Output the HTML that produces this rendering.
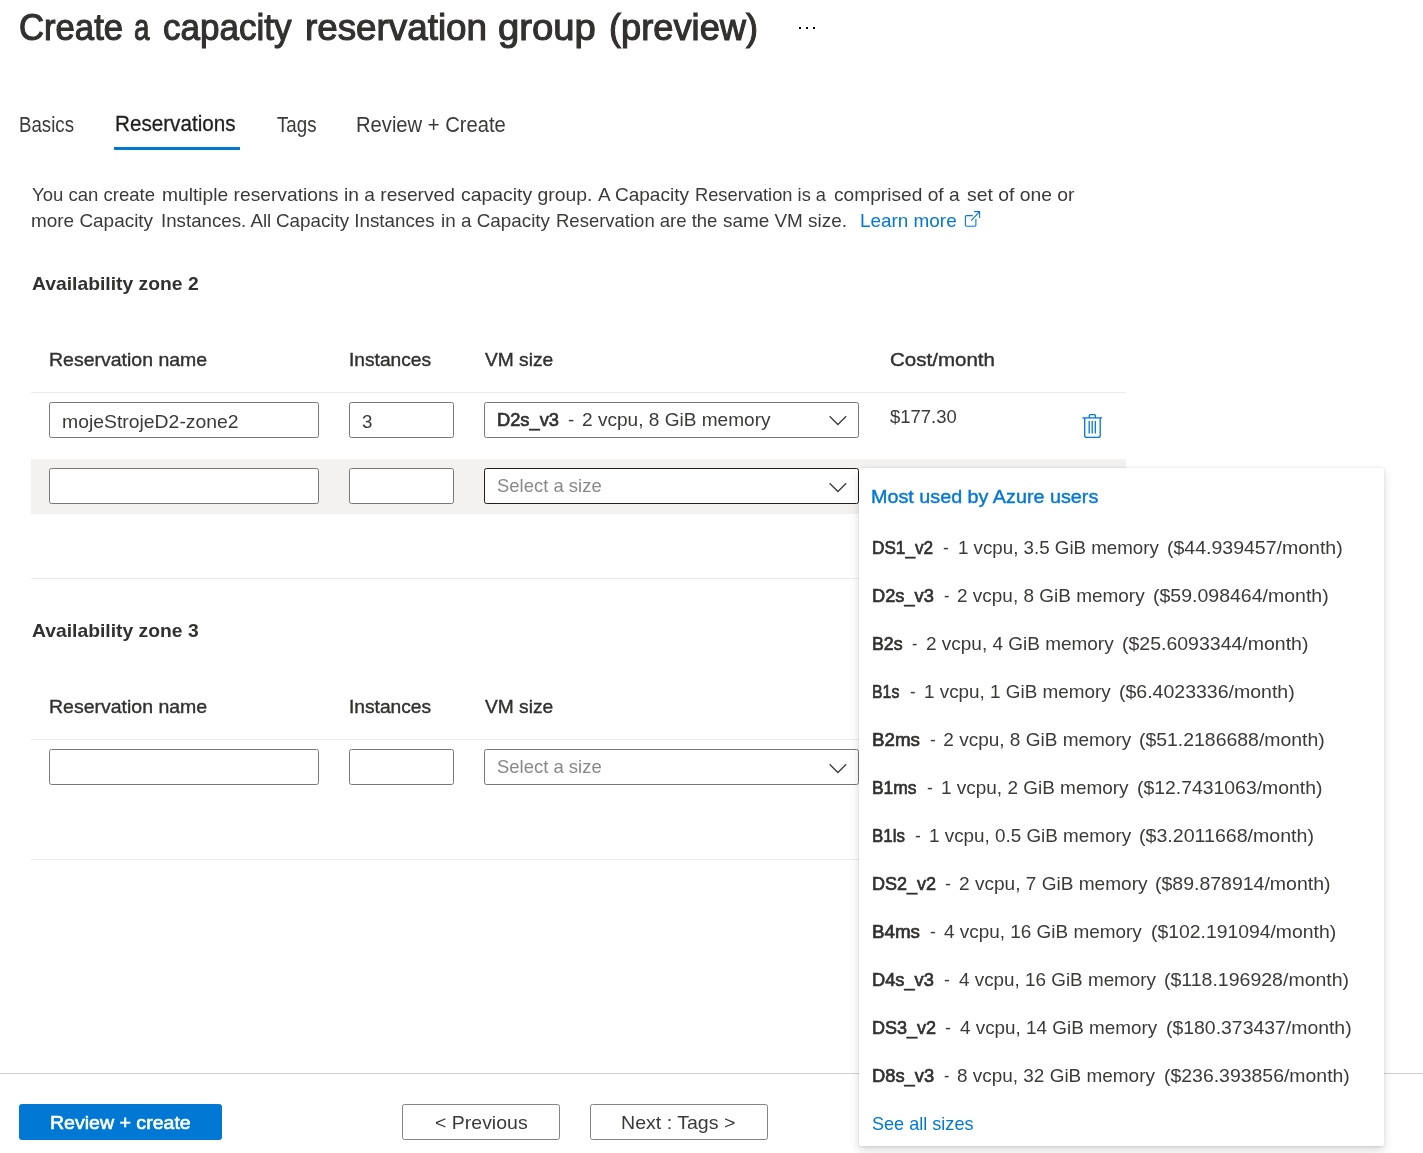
<!DOCTYPE html>
<html lang="en">
<head>
<meta charset="utf-8">
<title>Create a capacity reservation group (preview)</title>
<style>
html,body{margin:0;padding:0;background:#fff;}
body{position:relative;width:1423px;height:1153px;overflow:hidden;font-family:"Liberation Sans",sans-serif;color:#323130;}
.t{position:absolute;white-space:pre;font-size:19px;line-height:normal;transform-origin:0 0;color:#323130;}
.b{font-weight:bold;}
.s{-webkit-text-stroke:0.4px currentColor;}
.s3{-webkit-text-stroke:0.3px currentColor;}
.s9{-webkit-text-stroke:1.1px currentColor;}
.s6{-webkit-text-stroke:0.6px currentColor;}
.s7{-webkit-text-stroke:0.7px currentColor;}
.abs{position:absolute;box-sizing:border-box;}
.ln{position:absolute;height:1px;background:#edebe9;left:31px;width:1095px;}
.inp{position:absolute;box-sizing:border-box;height:36px;border:1px solid #7a7876;border-radius:2.5px;background:#fff;}
.btn{position:absolute;box-sizing:border-box;top:1104px;height:36px;border:1px solid #858381;border-radius:2.5px;background:#fff;}
svg{position:absolute;overflow:visible;}
</style>
</head>
<body>
<!-- tab underline -->
<div class="abs" style="left:114px;top:147px;width:126px;height:3px;background:#0078d4;"></div>
<!-- more dots -->
<div class="abs" style="left:799px;top:27px;width:2px;height:2px;background:#000;"></div>
<div class="abs" style="left:806px;top:27px;width:2px;height:2px;background:#000;"></div>
<div class="abs" style="left:813px;top:27px;width:2px;height:2px;background:#000;"></div>

<!-- zone 2 table -->
<div class="ln" style="top:392px;"></div>
<div class="abs" style="left:31px;top:459px;width:1095px;height:55px;background:#f3f2f1;"></div>
<div class="ln" style="top:578px;"></div>
<div class="inp" style="left:49px;top:402px;width:270px;"></div>
<div class="inp" style="left:349px;top:402px;width:105px;"></div>
<div class="inp" style="left:484px;top:402px;width:375px;"></div>
<div class="inp" style="left:49px;top:468px;width:270px;"></div>
<div class="inp" style="left:349px;top:468px;width:105px;"></div>
<div class="inp" style="left:484px;top:468px;width:375px;border-color:#201f1e;"></div>
<!-- zone 3 table -->
<div class="ln" style="top:739px;"></div>
<div class="ln" style="top:859px;"></div>
<div class="inp" style="left:49px;top:749px;width:270px;"></div>
<div class="inp" style="left:349px;top:749px;width:105px;"></div>
<div class="inp" style="left:484px;top:749px;width:375px;"></div>
<!-- chevrons -->
<svg style="left:829px;top:415px;" width="19" height="11" viewBox="0 0 19 11"><path d="M0.6 1.3 L8.9 9.5 L17.2 1.3" fill="none" stroke="#3b3a39" stroke-width="1.25"/></svg>
<svg style="left:829px;top:481.5px;" width="19" height="11" viewBox="0 0 19 11"><path d="M0.6 1.3 L8.9 9.5 L17.2 1.3" fill="none" stroke="#3b3a39" stroke-width="1.25"/></svg>
<svg style="left:829px;top:762.5px;" width="19" height="11" viewBox="0 0 19 11"><path d="M0.6 1.3 L8.9 9.5 L17.2 1.3" fill="none" stroke="#3b3a39" stroke-width="1.25"/></svg>
<!-- trash icon -->
<svg style="left:1080px;top:412px;" width="24" height="28" viewBox="0 0 24 28">
<g fill="none" stroke="#0078d4" stroke-width="1.3" stroke-linecap="butt">
<path d="M2.3 5.9 H22"/>
<path d="M9.3 5.9 V3.6 Q9.3 2.6 10.3 2.6 H14.4 Q15.4 2.6 15.4 3.6 V5.9"/>
<path d="M4.7 5.9 V23.4 Q4.7 25.4 6.7 25.4 H18.2 Q20.2 25.4 20.2 23.4 V5.9"/>
<path d="M9.2 9 V21.6 M12.2 9 V21.6 M15.3 9 V21.6"/>
</g></svg>
<!-- external link icon -->
<svg style="left:963px;top:209px;" width="19" height="19" viewBox="0 0 19 19">
<g fill="none" stroke="#0078d4" stroke-width="1.1">
<path d="M9.8 6.6 H3.6 Q2.4 6.6 2.4 7.8 V16 Q2.4 17.2 3.6 17.2 H11.7 Q12.9 17.2 12.9 16 V10.1"/>
<path d="M8.2 11.6 L16.6 2.6 M11.1 2.6 H16.6 V8.9"/>
</g></svg>

<!-- footer -->
<div class="abs" style="left:0;top:1073px;width:1423px;height:1px;background:#d2d0ce;"></div>
<div class="abs" style="left:19px;top:1104px;width:203px;height:36px;background:#0078d4;border-radius:3px;"></div>
<div class="btn" style="left:402px;width:158px;"></div>
<div class="btn" style="left:590px;width:178px;"></div>

<!-- dropdown panel -->
<div class="abs" style="left:859px;top:468px;width:525px;height:678px;background:#fff;border-radius:2px;box-shadow:0 4.8px 10.8px rgba(0,0,0,0.132),0 0.9px 2.7px rgba(0,0,0,0.108);"></div>

<div id="txt" style="position:absolute;left:0;top:0;width:1423px;height:1153px;will-change:transform;">
<span class="t s9" style="left:18.84px;top:6.7px;transform:scaleX(0.9632);font-size:36px;">Create</span>
<span class="t s9" style="left:134.33px;top:6.7px;transform:scaleX(0.7700);font-size:36px;">a</span>
<span class="t s9" style="left:163.03px;top:6.7px;transform:scaleX(0.9735);font-size:36px;">capacity</span>
<span class="t s9" style="left:305.36px;top:6.7px;transform:scaleX(1.0223);font-size:36px;">reservation</span>
<span class="t s9" style="left:498.44px;top:6.7px;transform:scaleX(1.0611);font-size:36px;">group</span>
<span class="t s9" style="left:608.89px;top:6.7px;transform:scaleX(1.0068);font-size:36px;">(preview)</span>
<span class="t" style="left:18.83px;top:113px;transform:scaleX(0.8694);font-size:21.5px;color:#3b3a39;">Basics</span>
<span class="t s3" style="left:114.64px;top:112.3px;transform:scaleX(0.9605);font-size:21.5px;color:#201f1e;">Reservations</span>
<span class="t" style="left:276.8px;top:113px;transform:scaleX(0.8711);font-size:21.5px;color:#3b3a39;">Tags</span>
<span class="t" style="left:356.16px;top:113px;transform:scaleX(0.9386);font-size:21.5px;color:#3b3a39;">Review + Create</span>
<span class="t" style="left:32.4px;top:184px;transform:scaleX(0.9754);color:#3b3a39;">You can create</span>
<span class="t" style="left:161.89px;top:184px;transform:scaleX(1.0116);color:#3b3a39;">multiple reservations</span>
<span class="t" style="left:343.99px;top:184px;transform:scaleX(1.0102);color:#3b3a39;">in a reserved</span>
<span class="t" style="left:461.2px;top:184px;transform:scaleX(1.0197);color:#3b3a39;">capacity group.</span>
<span class="t" style="left:597.8px;top:184px;transform:scaleX(1.0011);color:#3b3a39;">A Capacity</span>
<span class="t" style="left:695.44px;top:184px;transform:scaleX(0.9618);color:#3b3a39;">Reservation is a</span>
<span class="t" style="left:834.3px;top:184px;transform:scaleX(1.0080);color:#3b3a39;">comprised of a</span>
<span class="t" style="left:966.58px;top:184px;transform:scaleX(1.0181);color:#3b3a39;">set of one or</span>
<span class="t" style="left:31.4px;top:210.3px;transform:scaleX(0.9967);color:#3b3a39;">more Capacity</span>
<span class="t" style="left:160.62px;top:210.3px;transform:scaleX(0.9845);color:#3b3a39;">Instances. All</span>
<span class="t" style="left:275.71px;top:210.3px;transform:scaleX(0.9887);color:#3b3a39;">Capacity Instances</span>
<span class="t" style="left:440.51px;top:210.3px;transform:scaleX(0.9927);color:#3b3a39;">in a Capacity</span>
<span class="t" style="left:556.33px;top:210.3px;transform:scaleX(0.9732);color:#3b3a39;">Reservation are the</span>
<span class="t" style="left:723.3px;top:210.3px;transform:scaleX(0.9951);color:#3b3a39;">same VM size.</span>
<span class="t" style="left:860.21px;top:210.3px;transform:scaleX(0.9948);color:#0078d4;">Learn more</span>
<span class="t b" style="left:31.6px;top:272.8px;transform:scaleX(1.0159);">Availability zone 2</span>
<span class="t s" style="left:49.07px;top:349px;transform:scaleX(1.0255);">Reservation name</span>
<span class="t s" style="left:348.99px;top:349px;transform:scaleX(1.0100);">Instances</span>
<span class="t s" style="left:485px;top:349px;transform:scaleX(1.0090);">VM size</span>
<span class="t s" style="left:49.07px;top:696px;transform:scaleX(1.0255);">Reservation name</span>
<span class="t s" style="left:348.99px;top:696px;transform:scaleX(1.0100);">Instances</span>
<span class="t s" style="left:485px;top:696px;transform:scaleX(1.0090);">VM size</span>
<span class="t s" style="left:889.6px;top:349px;transform:scaleX(1.0804);">Cost/month</span>
<span class="t b" style="left:31.6px;top:620.1px;transform:scaleX(1.0159);">Availability zone 3</span>
<span class="t" style="left:62.18px;top:410.8px;transform:scaleX(1.0198);color:#3b3a39;">mojeStrojeD2-zone2</span>
<span class="t" style="left:362.31px;top:410.6px;transform:scaleX(0.9889);color:#3b3a39;">3</span>
<span class="t s7" style="left:497.24px;top:408.7px;transform:scaleX(0.9619);">D2s_v3</span>
<span class="t" style="left:568.2px;top:408.7px;transform:scaleX(0.9833);color:#3b3a39;">-</span>
<span class="t" style="left:581.6px;top:408.7px;transform:scaleX(1.0032);color:#3b3a39;">2 vcpu, 8 GiB memory</span>
<span class="t" style="left:890px;top:406.1px;transform:scaleX(0.9706);color:#3b3a39;">$177.30</span>
<span class="t" style="left:497.03px;top:474.7px;transform:scaleX(0.9717);color:#8a8886;">Select a size</span>
<span class="t" style="left:497.03px;top:755.7px;transform:scaleX(0.9717);color:#8a8886;">Select a size</span>
<span class="t s" style="left:871.06px;top:486px;transform:scaleX(1.0396);color:#0078d4;">Most used by Azure users</span>
<span class="t s7" style="left:872.4px;top:536.7px;transform:scaleX(0.9045);">DS1_v2</span>
<span class="t" style="left:942.6px;top:536.7px;transform:scaleX(0.9167);color:#3b3a39;">-</span>
<span class="t" style="left:957.51px;top:536.7px;transform:scaleX(0.9857);color:#3b3a39;">1 vcpu, 3.5 GiB memory</span>
<span class="t" style="left:1166.87px;top:536.7px;transform:scaleX(1.0266);color:#3b3a39;">($44.939457/month)</span>
<span class="t s7" style="left:872.34px;top:584.7px;transform:scaleX(0.9603);">D2s_v3</span>
<span class="t" style="left:943.7px;top:584.7px;transform:scaleX(0.8500);color:#3b3a39;">-</span>
<span class="t" style="left:957px;top:584.7px;transform:scaleX(0.9984);color:#3b3a39;">2 vcpu, 8 GiB memory</span>
<span class="t" style="left:1153.17px;top:584.7px;transform:scaleX(1.0266);color:#3b3a39;">($59.098464/month)</span>
<span class="t s7" style="left:872.37px;top:632.7px;transform:scaleX(0.9344);">B2s</span>
<span class="t" style="left:912.3px;top:632.7px;transform:scaleX(0.8333);color:#3b3a39;">-</span>
<span class="t" style="left:926px;top:632.7px;transform:scaleX(0.9984);color:#3b3a39;">2 vcpu, 4 GiB memory</span>
<span class="t" style="left:1121.77px;top:632.7px;transform:scaleX(1.0261);color:#3b3a39;">($25.6093344/month)</span>
<span class="t s7" style="left:872.47px;top:680.7px;transform:scaleX(0.8344);">B1s</span>
<span class="t" style="left:909.5px;top:680.7px;transform:scaleX(0.8833);color:#3b3a39;">-</span>
<span class="t" style="left:923.71px;top:680.7px;transform:scaleX(0.9936);color:#3b3a39;">1 vcpu, 1 GiB memory</span>
<span class="t" style="left:1118.97px;top:680.7px;transform:scaleX(1.0266);color:#3b3a39;">($6.4023336/month)</span>
<span class="t s7" style="left:872.31px;top:728.7px;transform:scaleX(0.9875);">B2ms</span>
<span class="t" style="left:929.6px;top:728.7px;transform:scaleX(0.9000);color:#3b3a39;">-</span>
<span class="t" style="left:943.3px;top:728.7px;transform:scaleX(1.0000);color:#3b3a39;">2 vcpu, 8 GiB memory</span>
<span class="t" style="left:1139.48px;top:728.7px;transform:scaleX(1.0222);color:#3b3a39;">($51.2186688/month)</span>
<span class="t s7" style="left:872.38px;top:776.7px;transform:scaleX(0.9167);">B1ms</span>
<span class="t" style="left:926.6px;top:776.7px;transform:scaleX(0.9167);color:#3b3a39;">-</span>
<span class="t" style="left:941.2px;top:776.7px;transform:scaleX(0.9979);color:#3b3a39;">1 vcpu, 2 GiB memory</span>
<span class="t" style="left:1136.68px;top:776.7px;transform:scaleX(1.0206);color:#3b3a39;">($12.7431063/month)</span>
<span class="t s7" style="left:872.41px;top:824.7px;transform:scaleX(0.8889);">B1ls</span>
<span class="t" style="left:914.8px;top:824.7px;transform:scaleX(0.9167);color:#3b3a39;">-</span>
<span class="t" style="left:929.01px;top:824.7px;transform:scaleX(0.9916);color:#3b3a39;">1 vcpu, 0.5 GiB memory</span>
<span class="t" style="left:1139.17px;top:824.7px;transform:scaleX(1.0310);color:#3b3a39;">($3.2011668/month)</span>
<span class="t s7" style="left:872.35px;top:872.7px;transform:scaleX(0.9485);">DS2_v2</span>
<span class="t" style="left:945.4px;top:872.7px;transform:scaleX(0.9500);color:#3b3a39;">-</span>
<span class="t" style="left:958.7px;top:872.7px;transform:scaleX(1.0032);color:#3b3a39;">2 vcpu, 7 GiB memory</span>
<span class="t" style="left:1155.47px;top:872.7px;transform:scaleX(1.0254);color:#3b3a39;">($89.878914/month)</span>
<span class="t s7" style="left:872.31px;top:920.7px;transform:scaleX(0.9875);">B4ms</span>
<span class="t" style="left:930px;top:920.7px;transform:scaleX(0.9167);color:#3b3a39;">-</span>
<span class="t" style="left:944.3px;top:920.7px;transform:scaleX(0.9965);color:#3b3a39;">4 vcpu, 16 GiB memory</span>
<span class="t" style="left:1150.68px;top:920.7px;transform:scaleX(1.0189);color:#3b3a39;">($102.191094/month)</span>
<span class="t s7" style="left:872.34px;top:968.7px;transform:scaleX(0.9603);">D4s_v3</span>
<span class="t" style="left:943.7px;top:968.7px;transform:scaleX(0.9167);color:#3b3a39;">-</span>
<span class="t" style="left:958.5px;top:968.7px;transform:scaleX(0.9925);color:#3b3a39;">4 vcpu, 16 GiB memory</span>
<span class="t" style="left:1164.37px;top:968.7px;transform:scaleX(1.0268);color:#3b3a39;">($118.196928/month)</span>
<span class="t s7" style="left:872.35px;top:1016.7px;transform:scaleX(0.9485);">DS3_v2</span>
<span class="t" style="left:945.4px;top:1016.7px;transform:scaleX(0.9500);color:#3b3a39;">-</span>
<span class="t" style="left:959.7px;top:1016.7px;transform:scaleX(0.9930);color:#3b3a39;">4 vcpu, 14 GiB memory</span>
<span class="t" style="left:1165.98px;top:1016.7px;transform:scaleX(1.0217);color:#3b3a39;">($180.373437/month)</span>
<span class="t s7" style="left:872.34px;top:1064.7px;transform:scaleX(0.9635);">D8s_v3</span>
<span class="t" style="left:944.2px;top:1064.7px;transform:scaleX(0.8333);color:#3b3a39;">-</span>
<span class="t" style="left:956.9px;top:1064.7px;transform:scaleX(0.9970);color:#3b3a39;">8 vcpu, 32 GiB memory</span>
<span class="t" style="left:1163.68px;top:1064.7px;transform:scaleX(1.0228);color:#3b3a39;">($236.393856/month)</span>
<span class="t" style="left:872.25px;top:1112.7px;transform:scaleX(0.9514);color:#0078d4;">See all sizes</span>
<span class="t s6" style="left:50.17px;top:1112.4px;transform:scaleX(1.0287);color:#ffffff;">Review + create</span>
<span class="t" style="left:435.37px;top:1112.4px;transform:scaleX(1.0258);color:#3b3a39;">&lt; Previous</span>
<span class="t" style="left:620.87px;top:1112.4px;transform:scaleX(1.0300);color:#3b3a39;">Next : Tags &gt;</span>
</div>
</body>
</html>
